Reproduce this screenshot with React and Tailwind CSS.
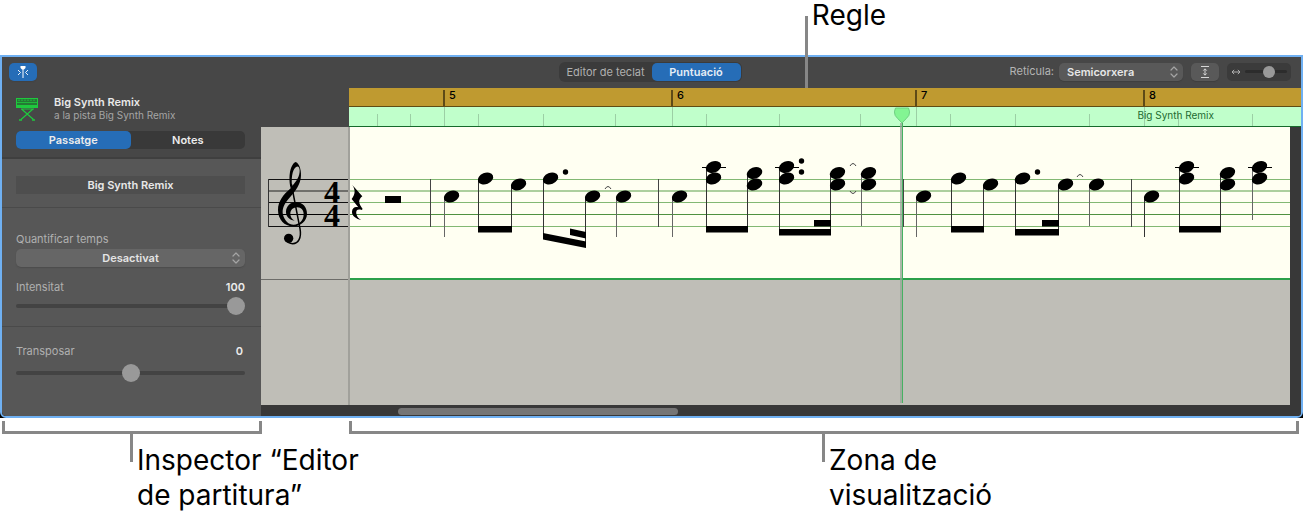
import { useState } from "react";
import clsx from "clsx";

// Width in px of every bar on the ruler, the first one is the partial bar 4
const bars = [
  { label: "", className: "w-[94px]" },
  { label: "5", className: "w-[228px] border-l-2" },
  { label: "6", className: "w-[244px] border-l-2" },
  { label: "7", className: "w-[228px] border-l-2" },
  { label: "8", className: "flex-1 border-l-2" },
];

const barTicks = [94, 322, 566, 794];
const noteTicks = [27, 60, 128, 193, 265, 356, 429, 510, 600, 665, 739, 828, 902];

const TOP_LINE = 52;
const staffLines = [
  { y: 0, height: 1, green: "#82b873", gray: "#111" },
  { y: 11, height: 2, green: "#adcf9e", gray: "#6f6f6b" },
  { y: 23, height: 1, green: "#82b873", gray: "#111" },
  { y: 35, height: 1, green: "#4f9140", gray: "#000" },
  { y: 47, height: 1, green: "#82b873", gray: "#111" },
];
const barLines = [80, 308, 553, 781];

// x = left edge of the note head (where the stem hangs), heads = distance from the top line
const notes = [
  { x: 94, heads: [17], end: 58, soft: true },
  { x: 128, heads: [-1], end: 52 },
  { x: 161, heads: [5], end: 52 },
  { x: 193, heads: [-1], end: 58, dots: [-7] },
  { x: 235, heads: [17], end: 67 },
  { x: 266, heads: [17], end: 58, soft: true },
  { x: 322, heads: [17], end: 58, soft: true },
  { x: 356, heads: [-12.5, -1], end: 52, ledger: true },
  { x: 397, heads: [-6.5, 5], end: 52 },
  { x: 429, heads: [-12.5, -1], end: 54, ledger: true, dots: [-18, -7] },
  { x: 480, heads: [-6.5, 5], end: 54 },
  { x: 511, heads: [-6.5, 5], end: 47, soft: true },
  { x: 566, heads: [17], end: 58, soft: true },
  { x: 601, heads: [-1], end: 52 },
  { x: 633, heads: [5], end: 52 },
  { x: 665, heads: [-1], end: 54, dots: [-7] },
  { x: 708, heads: [5], end: 54 },
  { x: 739, heads: [5], end: 47, soft: true },
  { x: 794, heads: [17], end: 58 },
  { x: 829, heads: [-12.5, -1], end: 52, ledger: true },
  { x: 870, heads: [-6.5, 5], end: 52 },
  { x: 902, heads: [-12.5, -1], end: 41, ledger: true, soft: true },
];

const beams = [
  "M128 47H162V53.5H128Z",
  "M193 54L236 62.5V69L193 60.5Z",
  "M220 49.5L236 53V59.5L220 56Z",
  "M356 47H398V53.5H356Z",
  "M429 50H481V56.5H429Z",
  "M464 41H481V47.5H464Z",
  "M601 47H634V53.5H601Z",
  "M665 50H709V56.5H665Z",
  "M692 41H709V47.5H692Z",
  "M829 47H871V53.5H829Z",
];

const ties = [
  "M255 10q3 -5 6 0",
  "M500 -13q3 -5 6 0",
  "M500 12q3 5 6 0",
  "M727 -2q3 -5 6 0",
];

const sliderBase =
  "appearance-none bg-transparent block w-full [&::-webkit-slider-thumb]:appearance-none [&::-webkit-slider-thumb]:rounded-full [&::-webkit-slider-thumb]:bg-[#999]";

function Slider({ small, className, ...props }) {
  return (
    <input
      type="range"
      className={clsx(
        sliderBase,
        small
          ? "h-3 [&::-webkit-slider-runnable-track]:h-[3px] [&::-webkit-slider-runnable-track]:rounded-full [&::-webkit-slider-runnable-track]:bg-[#2c2c2c] [&::-webkit-slider-thumb]:size-3 [&::-webkit-slider-thumb]:-mt-1"
          : "h-[18px] [&::-webkit-slider-runnable-track]:h-1 [&::-webkit-slider-runnable-track]:rounded-full [&::-webkit-slider-runnable-track]:bg-[#434343] [&::-webkit-slider-thumb]:size-[18px] [&::-webkit-slider-thumb]:-mt-[7px]",
        className
      )}
      {...props}
    />
  );
}

function Arrows() {
  return (
    <svg
      viewBox="0 0 8 12"
      className="pointer-events-none absolute right-[5px] top-[3px] h-3 w-2"
      fill="none"
      stroke="#a5a5a5"
      strokeWidth="1.2"
      strokeLinecap="round"
      strokeLinejoin="round"
    >
      <path d="M1 4L4 1L7 4M1 8L4 11L7 8" />
    </svg>
  );
}

function Toolbar() {
  const [editor, setEditor] = useState("score");
  const tab = (id) =>
    clsx(
      "h-[18px] rounded-[5px] text-[11px] leading-[18px]",
      editor === id ? "bg-[#266db7] font-semibold text-[#e4ecf5]" : "text-[#b0b0b0]"
    );

  return (
    <div className="grid h-[31px] grid-cols-[1fr_auto_1fr] items-center bg-[#474747] pb-[2px] pl-[7px] pr-[10px]">
      <button
        aria-label="Mostrar l'inspector"
        className="flex h-[18px] w-7 items-center justify-center rounded-[5px] bg-[#266db7] shadow-[0_1px_1px_#3334]"
      >
        <svg viewBox="0 0 14 14" className="size-[14px]" fill="none" stroke="#fff">
          <path d="M2 5L4.500 7.500L2 10M12 5L9.500 7.500L12 10" strokeWidth="0.900" />
          <path d="M7 3V13" strokeWidth="1" />
          <path d="M4.500 1H9.500V3L8 4.500H6L4.500 3Z" fill="#fff" stroke="none" />
        </svg>
      </button>

      <div className="flex h-5 items-center rounded-md bg-[#3b3b3b] p-px">
        <button className={clsx(tab("piano"), "w-[92px]")} onClick={() => setEditor("piano")}>
          Editor de teclat
        </button>
        <button className={clsx(tab("score"), "w-[89px]")} onClick={() => setEditor("score")}>
          Puntuació
        </button>
      </div>

      <div className="flex items-center justify-end gap-2">
        <div className="flex items-center gap-[5px]">
          <label htmlFor="grid" className="text-[11px] text-[#b4b4b4]">
            Retícula:
          </label>
          <div className="relative">
            <select
              id="grid"
              className="block h-[18px] w-[124px] appearance-none rounded-[5px] bg-[#595959] px-2 text-[11px] font-semibold leading-[18px] text-[#e6e6e6] shadow-[0_1px_1px_#3336]"
            >
              <option>Semicorxera</option>
              <option>Corxera</option>
            </select>
            <Arrows />
          </div>
        </div>
        <button
          aria-label="Ajustar l'alçada"
          className="flex h-[18px] w-7 items-center justify-center rounded-[5px] bg-[#595959] shadow-[0_1px_1px_#3336]"
        >
          <svg viewBox="0 0 12 14" className="h-[14px] w-3" fill="none" stroke="#d6d6d6" strokeWidth="1">
            <path d="M2 1.500H10M2 12.500H10M6 4V10M4.300 5.600L6 3.800L7.700 5.600M4.300 8.400L6 10.200L7.700 8.400" />
          </svg>
        </button>
        <div className="flex h-[18px] w-16 items-center gap-1 rounded-[5px] bg-[#3b3b3b] px-1">
          <svg viewBox="0 0 12 8" className="h-2 w-[10px] shrink-0" fill="none" stroke="#b0b0b0" strokeWidth="1.200">
            <path d="M1.500 4H10.500M3.800 1.500L1.200 4L3.800 6.500M8.200 1.500L10.800 4L8.200 6.500" />
          </svg>
          <Slider small aria-label="Zoom" defaultValue={60} className="min-w-0" />
        </div>
      </div>
    </div>
  );
}

function SynthIcon() {
  return (
    <svg viewBox="0 0 22 23" className="h-[23px] w-[22px]" fill="none" stroke="#1fc83e">
      <rect x="0.500" y="0.500" width="21" height="9" fill="#247a34" strokeWidth="1" />
      <path d="M1 4.500H21" strokeWidth="0.800" />
      <path d="M3 1.500V3M6 1.500V3M9 1.500V3M12 1.500V3M15 1.500V3M18 1.500V3" strokeWidth="1" />
      <path d="M1 8H21" strokeWidth="2" />
      <path d="M5 11H18M17 11L5 21.500M5.500 11L17.500 21.500" strokeWidth="1.200" />
      <path d="M3 22H6M16 22H19" strokeWidth="1.600" />
    </svg>
  );
}

function Inspector() {
  const [tab, setTab] = useState("region");
  const [velocity, setVelocity] = useState(100);
  const [transpose, setTranspose] = useState(0);
  const tabClass = (id) =>
    clsx(
      "h-[18px] w-1/2 rounded-[5px] text-[11px] font-semibold leading-[18px] text-[#ececec]",
      tab === id && "bg-[#266db7]"
    );

  return (
    <aside className="flex w-[259px] shrink-0 flex-col bg-[#575757] text-[11px] leading-4">
      <div className="border-b-2 border-[#3f3f3f] bg-[#474747] pb-2 pl-[14px] pr-4 pt-2">
        <div className="flex items-center gap-4">
          <SynthIcon />
          <div className="leading-[13px]">
            <div className="font-semibold text-[#e8e8e8]">Big Synth Remix</div>
            <div className="text-[10px] text-[#a5a5a5]">a la pista Big Synth Remix</div>
          </div>
        </div>
        <div className="mt-[9px] flex rounded-[5px] bg-[#393939]">
          <button className={tabClass("region")} onClick={() => setTab("region")}>
            Passatge
          </button>
          <button className={tabClass("notes")} onClick={() => setTab("notes")}>
            Notes
          </button>
        </div>
      </div>

      <div className="border-b border-[#4a4a4a] pb-[13px] pl-[14px] pr-4 pt-[17px]">
        <input
          aria-label="Nom del passatge"
          defaultValue="Big Synth Remix"
          className="block h-[18px] w-full bg-[#4e4e4e] text-center font-semibold text-[#e8e8e8]"
        />
      </div>

      <div className="border-b border-[#4a4a4a] pb-[11px] pl-[14px] pr-4 pt-[23px]">
        <label htmlFor="quantize" className="block text-[#b0b0b0]">
          Quantificar temps
        </label>
        <div className="relative mt-[2px]">
          <select
            id="quantize"
            className="block h-[18px] w-full appearance-none rounded-[5px] bg-[#666] text-center font-semibold leading-[18px] text-[#e4e4e4] shadow-[0_1px_1px_#4448]"
          >
            <option>Desactivat</option>
            <option>Activat</option>
          </select>
          <Arrows />
        </div>
        <div className="mt-3 flex justify-between">
          <label htmlFor="velocity" className="text-[#b0b0b0]">
            Intensitat
          </label>
          <span className="font-semibold text-[#ececec]">{velocity}</span>
        </div>
        <Slider
          id="velocity"
          className="mt-[2px]"
          max={100}
          value={velocity}
          onChange={(e) => setVelocity(+e.target.value)}
        />
      </div>

      <div className="pl-[14px] pr-4 pt-4">
        <div className="flex justify-between pr-[2px]">
          <label htmlFor="transpose" className="text-[#b0b0b0]">
            Transposar
          </label>
          <span className="font-semibold text-[#ececec]">{transpose}</span>
        </div>
        <Slider
          id="transpose"
          className="mt-[5px]"
          min={-36}
          max={36}
          value={transpose}
          onChange={(e) => setTranspose(+e.target.value)}
        />
      </div>
    </aside>
  );
}

function Ruler() {
  return (
    <div className="ml-[88px]">
      <div className="flex h-[19px] border-b border-[#5f4c14] bg-[#bf9a30]">
        {bars.map((bar) => (
          <div
            key={bar.label}
            className={clsx("mt-[2px] shrink-0 border-[#5d4a17] pl-1 text-[11px] font-medium leading-[11px] text-black", bar.className)}
          >
            {bar.label}
          </div>
        ))}
      </div>
      <div className="grid h-5 border-b border-[#166a2b] bg-[#c0ffcb]">
        <svg className="col-start-1 row-start-1 h-[19px] w-full" stroke="#9ccfa5" strokeWidth="1">
          {barTicks.map((x) => (
            <path key={x} d={`M${x + 1.5} 0V19`} />
          ))}
          {noteTicks.map((x) => (
            <path key={x} d={`M${x + 1.5} 7V19`} />
          ))}
        </svg>
        <div className="col-start-1 row-start-1 pr-[87px] text-right text-[10px] leading-[17px] text-[#1d6b31]">
          Big Synth Remix
        </div>
      </div>
    </div>
  );
}

function ClefColumn() {
  return (
    <div className="w-[89px] shrink-0 border-r-2 border-[#a1a19b] bg-[#bfbeb7]">
      <div className="h-[153px] border-b border-[#6d6d69]">
        <svg className="block h-[152px] w-full">
          {staffLines.map((line) => (
            <rect key={line.y} x="7" y={TOP_LINE + line.y} width="82" height={line.height} fill={line.gray} />
          ))}
          <rect x="7" y={TOP_LINE} width="1" height="48" fill="#333" />
          {/* Treble clef */}
          <g transform="translate(-1 -47) scale(0.3333)">
            <path
              fillRule="evenodd"
              d="M107 246C119 250 126 276 122 296C117 322 100 340 86 356C72 372 65 388 69 404C74 422 86 434 101 434C118 434 131 421 131 403C131 390 123 381 110 382C98 383 91 391 91 402C91 411 96 418 104 422C88 420 78 410 78 396C78 378 92 366 108 366C127 366 141 381 141 401C141 423 122 439 99 439C73 439 54 418 54 390C54 364 70 344 92 325C87 305 87 280 94 262C98 252 103 247 107 246ZM110 260C100 264 93 285 96 318C110 303 119 288 119 272C119 263 115 258 110 260Z"
            />
            <path d="M94 312L120 446C125 474 115 491 98 491C89 491 82 487 78 480" fill="none" stroke="#000" strokeWidth="4.500" />
            <circle cx="86" cy="475" r="14" />
          </g>
          <text fontFamily="Liberation Serif, serif" fontWeight="700" fontSize="32">
            <tspan x="63" y="76">4</tspan>
            <tspan x="63" y="99">4</tspan>
          </text>
        </svg>
      </div>
    </div>
  );
}

function Staff() {
  return (
    <svg className="block h-[151px] w-full bg-[#fffff2]">
      {staffLines.map((line) => (
        <rect key={line.y} y={TOP_LINE + line.y} width="100%" height={line.height} fill={line.green} />
      ))}
      {barLines.map((x) => (
        <rect key={x} x={x} y={TOP_LINE} width="1" height="48" fill="#444" />
      ))}
      <g transform={`translate(0 ${TOP_LINE})`}>
        {/* Rests */}
        <path
          transform="translate(-90 -99.300) scale(0.3333)"
          d="M277 316L307 350C294 361 295 370 308 388L305 391C293 387 287 392 289 402C291 412 297 417 304 421C289 418 275 408 276 396C277 384 285 380 295 383L275 358C286 344 287 331 277 316Z"
        />
        <rect x="35" y="17" width="16" height="7" />
        {notes.map((note) => (
          <g key={note.x}>
            <rect
              x={note.x}
              y={note.heads[0] + 1}
              width="1"
              height={note.end - note.heads[0] - 1}
              fill={note.soft ? "#666" : "#333"}
            />
            {note.ledger && <rect x={note.x - 4} y="-12" width="24" height="1" />}
            {note.heads.map((y) => (
              <ellipse
                key={y}
                cx={note.x + 7.5}
                cy={y + 0.5}
                rx="8"
                ry="5.700"
                transform={`rotate(-22 ${note.x + 7.5} ${y + 0.5})`}
              />
            ))}
            {note.dots?.map((y) => (
              <circle key={y} cx={note.x + 22.500} cy={y} r="2.700" />
            ))}
          </g>
        ))}
        {beams.map((d) => (
          <path key={d} d={d} />
        ))}
        {ties.map((d) => (
          <path key={d} d={d} fill="none" stroke="#444" strokeWidth="1" />
        ))}
      </g>
    </svg>
  );
}

function Playhead() {
  return (
    <svg
      viewBox="0 0 18 297"
      className="absolute left-[632px] top-[19px] h-[297px] w-[18px]"
      strokeWidth="1"
    >
      <path d="M8.500 16V296" stroke="#98a898" strokeWidth="3" opacity="0.800" />
      <path d="M9.500 16V296" stroke="#46b162" strokeWidth="1" />
      <path d="M2.500 1H15.500Q17.500 5 15.800 8.500Q14 11 9 16Q4 11 2.200 8.500Q0.500 5 2.500 1Z" fill="#83f593" stroke="#6fcf82" strokeLinejoin="round" />
    </svg>
  );
}

function ScoreView() {
  return (
    <main className="relative flex min-w-0 flex-1 flex-col bg-[#474747]">
      <Ruler />
      <div className="flex h-[278px]">
        <ClefColumn />
        <div className="min-w-0 flex-1 bg-[#bfbeb7]">
          <div className="border-b-2 border-[#2ba04a]">
            <Staff />
          </div>
        </div>
        <div className="w-[11px] shrink-0 bg-[#383838]" />
      </div>
      <div className="h-[11px] bg-[#383838] pl-[137px] pt-[3px]">
        <div className="h-[7px] w-[280px] rounded-full bg-[#757575]" />
      </div>
      <Playhead />
    </main>
  );
}

function Callout({ children }) {
  return (
    <>
      <div className="h-[13px] border-x-3 border-b-3 border-[#878787]" />
      <div className="ml-[50%] flex">
        <div className="-ml-[2px] h-7 w-[3px] shrink-0 bg-[#878787]" />
        <p className="ml-1 mt-[9px] whitespace-nowrap">{children}</p>
      </div>
    </>
  );
}

export default function App() {
  return (
    <div className="bg-white font-['Inter',sans-serif] text-black">
      <div className="relative h-[55px] pl-[62%] text-[28px] leading-[30px]">
        <p className="pl-1">Regle</p>
        <div className="absolute left-[61.800%] top-4 h-[72px] w-[3px] bg-[#878787]" />
      </div>

      <div className="bg-black">
        <div className="overflow-hidden rounded-b-md border-2 border-[#6fb0f2]">
          <Toolbar />
          <div className="flex">
            <Inspector />
            <ScoreView />
          </div>
        </div>
      </div>

      <div className="flex gap-[87px] pl-[2px] pr-1 pt-[3px] text-[28px] leading-[35px]">
        <div className="w-[260px] shrink-0">
          <Callout>
            Inspector “Editor
            <br />
            de partitura”
          </Callout>
        </div>
        <div className="flex-1">
          <Callout>
            Zona de
            <br />
            visualització
          </Callout>
        </div>
      </div>
    </div>
  );
}
